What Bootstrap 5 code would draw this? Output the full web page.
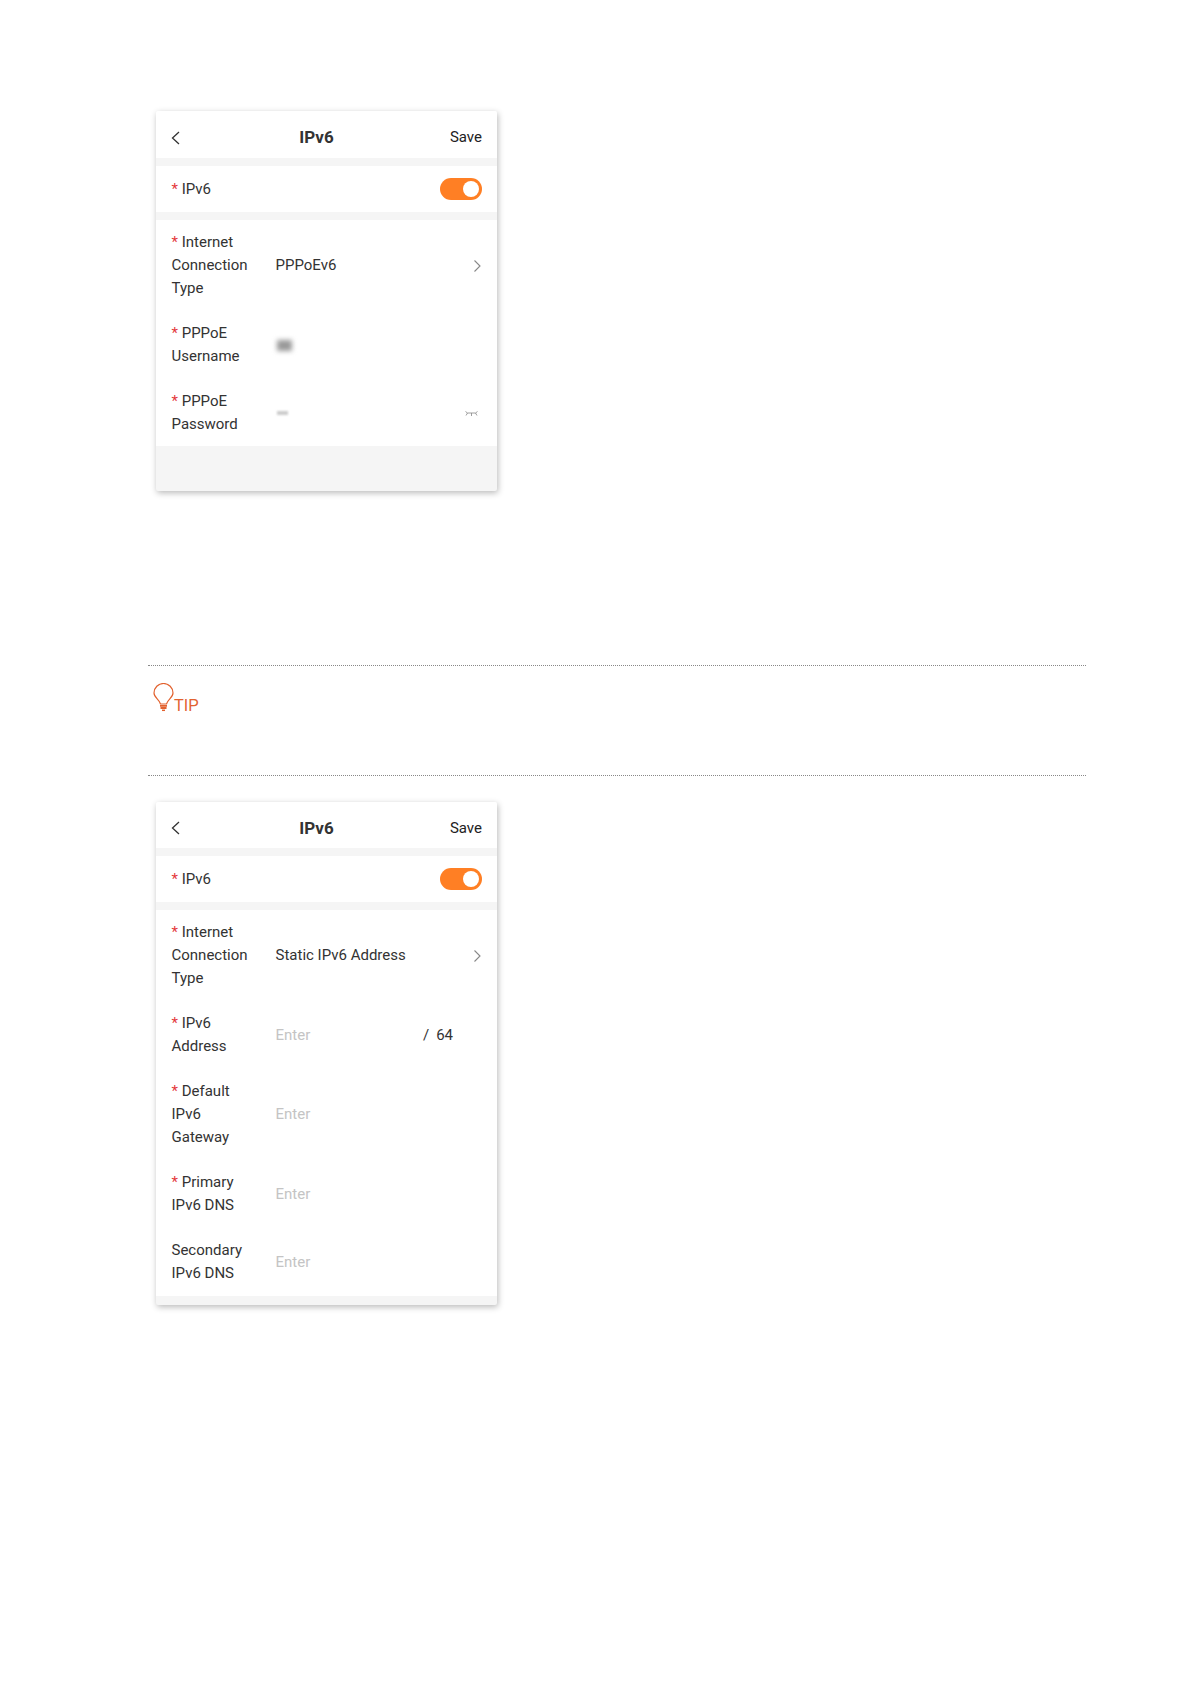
<!DOCTYPE html>
<html lang="en">
<head>
<meta charset="utf-8">
<title>IPv6</title>
<link rel="stylesheet" href="https://cdn.jsdelivr.net/npm/bootstrap@5.3.0/dist/css/bootstrap.min.css">
<style>
body{background:#fff;font-family:Roboto,"Liberation Sans",sans-serif;color:#333;font-size:15px;line-height:23px}
.sheet{padding:111px 105px 380px 148px}
.phone{width:341px;margin-left:8px;background:#f5f5f5;box-shadow:1px 2px 6px rgba(0,0,0,.28);border-radius:2px;overflow:hidden}
.phone.first{height:380px}
.phone.second{height:503px}
.phone-head{height:47px;padding:6px 15px 0;background:#fff;margin-bottom:8px}
.second .phone-head{height:46px}
.phone-title{font-size:17px;font-weight:700;color:#333}
.phone-save{color:#222}
.switch-row{height:46px;padding:0 15px 0 15.5px;background:#fff;margin-bottom:8px}
.switcher{width:42px;height:22px;border-radius:11px;background:#ff7f24;padding-right:3px}
.switcher i{display:block;width:16px;height:16px;border-radius:50%;background:#fff}
.form-block{background:#fff;padding:0 15px 10px 15.5px}
.second .form-block{padding-bottom:11px}
.form-line{padding-top:11px;padding-bottom:11px}
.form-line:last-child{padding-bottom:0}
.field-name{width:104px;flex:none;padding-right:23px}
.req{color:#e4393c}
.placeholder-text{color:#c4c4c4}
.prefix{color:#333;margin-right:29px}
.prefix b{font-weight:400;margin-right:7px}
.smudge{display:block;background:#999;filter:blur(2.5px)}
.smudge.name{width:15px;height:11px;margin-left:1px}
.smudge.pass{width:11px;height:4px;background:#ccc;filter:blur(1.2px);margin-left:1px}
.tip-box{height:111px;margin-top:174px;margin-bottom:26px;border-top:1px dotted #888;border-bottom:1px dotted #888;width:938px;padding:17px 0 0 5px;color:#e2622f}
.tip-word{font-family:"Liberation Sans",sans-serif;font-size:16px;line-height:16px;padding-top:15px}
</style>
</head>
<body>
<div class="sheet">
  <div class="phone first">
    <div class="phone-head d-flex align-items-center">
      <svg width="12" height="16" viewBox="0 0 12 16" fill="none" stroke="#333" stroke-width="1.3"><path d="M8 2 1.500 8 8 14"/></svg>
      <div class="phone-title flex-grow-1 text-center">IPv6</div>
      <div class="phone-save">Save</div>
    </div>
    <div class="switch-row d-flex align-items-center justify-content-between">
      <div><span class="req">*</span> IPv6</div>
      <div class="switcher d-flex align-items-center justify-content-end"><i></i></div>
    </div>
    <div class="form-block">
      <div class="form-line d-flex align-items-center">
        <div class="field-name"><span class="req">*</span> Internet Connection Type</div>
        <div class="flex-grow-1">PPPoEv6</div>
        <svg width="10" height="14" viewBox="0 0 10 14" fill="none" stroke="#888" stroke-width="1.1"><path d="M2.5 1.500 8 7l-5.500 5.500"/></svg>
      </div>
      <div class="form-line d-flex align-items-center">
        <div class="field-name"><span class="req">*</span> PPPoE Username</div>
        <div class="flex-grow-1"><span class="smudge name"></span></div>
      </div>
      <div class="form-line d-flex align-items-center">
        <div class="field-name"><span class="req">*</span> PPPoE Password</div>
        <div class="flex-grow-1"><span class="smudge pass"></span></div>
        <svg class="me-1" width="13" height="7" viewBox="0 0 13 7" fill="none" stroke="#888" stroke-width=".8"><path d="M.5 1.500 2.500 3h8l2-1.500M2.500 3 1 5.500M6.500 3V6M10.500 3 12 5.500"/></svg>
      </div>
    </div>
  </div>

  <div class="tip-box">
    <div class="d-flex">
      <svg width="21" height="29" viewBox="0 0 21 29" fill="none" stroke="#e2622f" stroke-width="1.2"><path d="M7.500 21C6.500 16.500 1 14.500 1 10a9.500 9.500 0 0 1 19 0c0 4.500-5.500 6.500-6.500 11z"/><path d="M7 22.800h7M7.500 25h6" stroke-width="1.800"/><path d="M9 27.300h3" stroke-width="1.500"/></svg>
      <div class="tip-word">TIP</div>
    </div>
  </div>

  <div class="phone second">
    <div class="phone-head d-flex align-items-center">
      <svg width="12" height="16" viewBox="0 0 12 16" fill="none" stroke="#333" stroke-width="1.3"><path d="M8 2 1.500 8 8 14"/></svg>
      <div class="phone-title flex-grow-1 text-center">IPv6</div>
      <div class="phone-save">Save</div>
    </div>
    <div class="switch-row d-flex align-items-center justify-content-between">
      <div><span class="req">*</span> IPv6</div>
      <div class="switcher d-flex align-items-center justify-content-end"><i></i></div>
    </div>
    <div class="form-block">
      <div class="form-line d-flex align-items-center">
        <div class="field-name"><span class="req">*</span> Internet Connection Type</div>
        <div class="flex-grow-1">Static IPv6 Address</div>
        <svg width="10" height="14" viewBox="0 0 10 14" fill="none" stroke="#888" stroke-width="1.1"><path d="M2.5 1.500 8 7l-5.500 5.500"/></svg>
      </div>
      <div class="form-line d-flex align-items-center">
        <div class="field-name"><span class="req">*</span> IPv6 Address</div>
        <div class="flex-grow-1 placeholder-text">Enter</div>
        <div class="prefix"><b>/</b>64</div>
      </div>
      <div class="form-line d-flex align-items-center">
        <div class="field-name"><span class="req">*</span> Default IPv6 Gateway</div>
        <div class="flex-grow-1 placeholder-text">Enter</div>
      </div>
      <div class="form-line d-flex align-items-center">
        <div class="field-name"><span class="req">*</span> Primary IPv6 DNS</div>
        <div class="flex-grow-1 placeholder-text">Enter</div>
      </div>
      <div class="form-line d-flex align-items-center">
        <div class="field-name">Secondary IPv6 DNS</div>
        <div class="flex-grow-1 placeholder-text">Enter</div>
      </div>
    </div>
  </div>
</div>
<script src="https://cdn.jsdelivr.net/npm/bootstrap@5.3.0/dist/js/bootstrap.bundle.min.js"></script>
</body>
</html>
